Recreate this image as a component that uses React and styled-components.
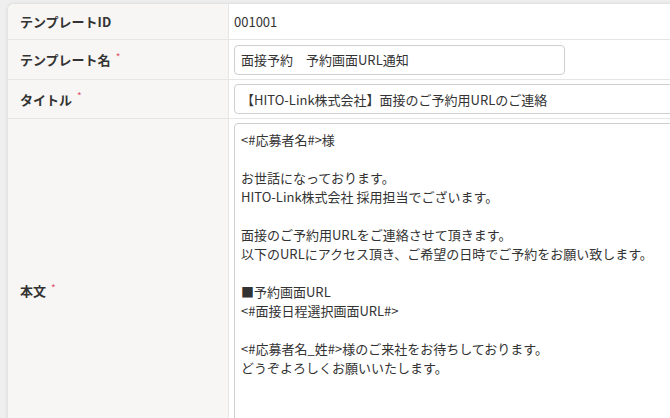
import React from "react"
import styled, { createGlobalStyle } from "styled-components"

const GlobalStyle = createGlobalStyle`
  html, body {
    margin: 0;
    padding: 0;
    background: #efefef;
    overflow: hidden;
  }
  body {
    font-family: "Noto Sans CJK JP", "Noto Sans", sans-serif;
    color: #333;
  }
`

const body = `<#応募者名#>様

お世話になっております。
HITO-Link株式会社 採用担当でございます。

面接のご予約用URLをご連絡させて頂きます。
以下のURLにアクセス頂き、ご希望の日時でご予約をお願い致します。

■予約画面URL
<#面接日程選択画面URL#>

<#応募者名_姓#>様のご来社をお待ちしております。
どうぞよろしくお願いいたします。`

function App() {
  return (
    <>
      <GlobalStyle />
      <Page>
        <Card>
          <Row $h="36px">
            <Label>テンプレートID</Label>
            <Value>
              <PlainText>001001</PlainText>
            </Value>
          </Row>
          <Row $h="40px">
            <Label>
              テンプレート名<Required>*</Required>
            </Label>
            <Value>
              <TextInput $width="331px" defaultValue="面接予約　予約画面URL通知" />
            </Value>
          </Row>
          <Row $h="39px">
            <Label>
              タイトル<Required>*</Required>
            </Label>
            <Value>
              <TextInput $width="560px" defaultValue="【HITO-Link株式会社】面接のご予約用URLのご連絡" />
            </Value>
          </Row>
          <Row $h="344px">
            <Label>
              本文<Required>*</Required>
            </Label>
            <Value $top>
              <BodyArea defaultValue={body} />
            </Value>
          </Row>
        </Card>
      </Page>
    </>
  )
}
export default App

const Page = styled.div`
    padding: 4px 0 0 8px;
    height: 418px;
    box-sizing: border-box;
`

const Card = styled.div`
    width: 760px;
    background: #fff;
    border-radius: 6px 0 0 0;
    box-shadow: 0 0 4px rgba(0, 0, 0, 0.12);
    overflow: hidden;
`

const Row = styled.div`
    display: grid;
    grid-template-columns: 221px 1fr;
    box-sizing: border-box;
    height: ${(p) => p.$h};
    border-bottom: 1px solid #e6e5e3;
`

const Label = styled.div`
    display: flex;
    align-items: center;
    padding: 0 12px;
    background: #f7f6f4;
    border-right: 1px solid #e6e5e3;
    font-size: 13px;
    font-weight: 700;
    color: #333;
`

const Required = styled.span`
    color: #e0536a;
    font-size: 10px;
    font-weight: 400;
    margin-left: 5px;
    line-height: 1;
    transform: translateY(-3px);
`

const Value = styled.div`
    display: flex;
    align-items: ${(p) => (p.$top ? "flex-start" : "center")};
    padding: ${(p) => (p.$top ? "4px 5px" : "0 5px")};
`

const PlainText = styled.span`
    font-size: 13px;
    color: #333;
`

const TextInput = styled.input`
    width: ${(p) => p.$width};
    height: 30px;
    box-sizing: border-box;
    border: 1px solid #cfcfcf;
    border-radius: 4px;
    padding: 0 6px;
    font-family: "Noto Sans CJK JP", "Noto Sans", sans-serif;
    font-size: 13px;
    color: #333;
    background: #fff;
    outline: none;
`

const BodyArea = styled.textarea`
    width: 560px;
    height: 334px;
    box-sizing: border-box;
    border: 1px solid #cfcfcf;
    border-radius: 4px;
    padding: 6px;
    font-family: "Noto Sans CJK JP", "Noto Sans", sans-serif;
    font-size: 13px;
    line-height: 19px;
    color: #333;
    resize: none;
    outline: none;
    overflow: hidden;
`
